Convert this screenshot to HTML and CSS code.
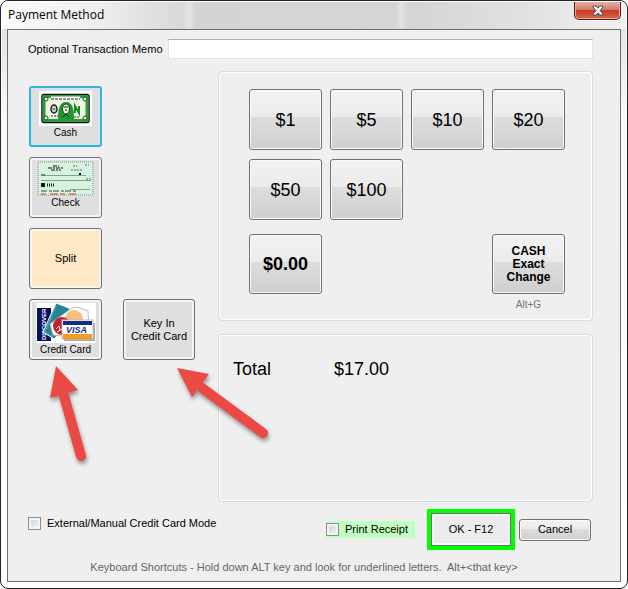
FILE: index.html
```html
<!DOCTYPE html>
<html lang="en">
<head>
    <meta charset="UTF-8">
    <meta name="viewport" content="width=device-width, initial-scale=1.0">
    <title>Payment Method</title>
    <link rel="stylesheet" href="styles.css">
</head>
<body>
    <div class="window">
        <!-- Title bar -->
        <header class="titlebar">
            <h1>Payment Method</h1>
            <button type="button" class="close" aria-label="Close">
                <svg width="12" height="11" viewBox="0 0 12 11">
                    <path d="M1 1h3.2L6 3.2 7.8 1H11v1L8 5.5 11 9v1H7.8L6 7.8 4.2 10H1V9l3-3.5L1 2z" fill="#fff" stroke="#4a4a5c"/>
                </svg>
            </button>
        </header>

        <form class="content">
            <!-- Memo -->
            <div class="memo">
                <label for="memo">Optional Transaction Memo</label>
                <input type="text" id="memo" name="memo">
            </div>

            <div class="main">
                <!-- Payment methods -->
                <div class="methods">
                    <button type="button" class="btn method selected">
                        <svg width="53" height="35" viewBox="0 0 53 35">
                            <rect width="53" height="35" fill="#fff"/>
                            <rect x="3" y="3.5" width="47" height="28" rx="2" fill="#eef6e2" stroke="#111" stroke-width="1.5"/>
                            <rect x="5" y="5.5" width="43" height="24" fill="none" stroke="#2f9a38" stroke-width="3"/>
                            <path d="M12 7h29" stroke="#fff" stroke-width="3"/>
                            <path d="M12 8h29" stroke="#222" stroke-dasharray="3 1"/>
                            <path d="M19 28c0-9 1-17 8-17s8 8 8 17z" fill="#1f9630"/>
                            <ellipse cx="27" cy="18" rx="3.5" ry="5" fill="#e6efd6" stroke="#173d18"/>
                            <path d="M25 16h4M26 19h2M24 26l3-3 3 3" stroke="#222" fill="none"/>
                            <ellipse cx="15" cy="18" rx="3" ry="4" fill="#ccc" stroke="#222" stroke-width="1.5"/>
                            <path d="M14 18h2" stroke="#222"/>
                            <path d="M36 22v-7l4 7v-7" stroke="#178a24" stroke-width="2" fill="none"/>
                            <path d="M12 25h7M35 26h6" stroke="#333" stroke-dasharray="2 1"/>
                            <g fill="#eaf5dc" stroke="#0c5817"><circle cx="7" cy="8" r="2"/><circle cx="46" cy="8" r="2"/><circle cx="7" cy="27" r="2"/><circle cx="46" cy="27" r="2"/></g>
                        </svg>
                        <span>Cash</span>
                    </button>
                    <button type="button" class="btn method">
                        <svg width="57" height="35" viewBox="0 0 57 35">
                            <rect x="1" y="1" width="55" height="33" fill="#d5f3df" stroke="#8a8a8a" stroke-dasharray="1 1"/>
                            <path d="M16 5h6M11 7h15M14 9h10" stroke="#111" stroke-dasharray="4 1 2 1"/>
                            <path d="M36 5h4M48 4h4M34 9h11M49 18h5" stroke="#666" stroke-dasharray="2 1"/>
                            <path d="M4 14h4" stroke="#111"/>
                            <path d="M8 14.5h41M4 19.5h50M33 28.5h20" stroke="#7fa58d"/>
                            <path d="M42 13h2" stroke="#111" stroke-width="2"/>
                            <rect x="4" y="22" width="4" height="4" fill="#111"/>
                            <path d="M10 24h8" stroke="#222" stroke-width="3" stroke-dasharray="1 1"/>
                            <path d="M4 30h35" stroke="#444" stroke-dasharray="6 2 3 1"/>
                            <path d="M4 33h35" stroke="#d33" stroke-dasharray="5 4 8 2"/>
                        </svg>
                        <span>Check</span>
                    </button>
                    <button type="button" class="btn split">Split</button>
                    <button type="button" class="btn method">
                        <svg width="60" height="40" viewBox="0 0 60 40">
                            <rect width="60" height="40" fill="#fff"/>
                            <rect x="1" y="5" width="14" height="33" fill="#07105c"/>
                            <text transform="translate(10 37) rotate(-90)" class="discover">DISCOVER</text>
                            <path d="M20 0l13 5 3 13-18 18L7 29z" fill="#258497" stroke="#fff"/>
                            <path d="M20 3L9 29l8 5" fill="none" stroke="#9bd0d6" stroke-dasharray="1 1"/>
                            <path d="M14 21L36 5q4-2 8 0l8 3 1 22-17 4-19-2z" fill="#fbfbf8" stroke="#bbb"/>
                            <circle cx="38" cy="16" r="9" fill="#f4c080"/>
                            <circle cx="26" cy="23" r="9" fill="#c5202e"/>
                            <path d="M20 26l3-3 1 4M21 29l5-3" stroke="#fff" fill="none"/>
                            <rect x="28" y="20" width="31" height="18" fill="#aaa"/>
                            <rect x="26" y="17" width="31" height="19" fill="#fff" stroke="#bbb"/>
                            <rect x="27" y="18" width="29" height="4" fill="#112f7d"/>
                            <text x="30" y="30" class="visa">VISA</text>
                            <rect x="27" y="31" width="29" height="5" fill="#f79c1d"/>
                        </svg>
                        <span>Credit Card</span>
                    </button>
                    <button type="button" class="btn keyin">Key In<br>Credit Card</button>

                    <!-- Callout arrows -->
                    <svg class="arrow arrow-card" width="60" height="110" viewBox="0 0 60 110">
                        <path d="M24 36L41 96" stroke="#ea4a43" stroke-width="10" stroke-linecap="round"/>
                        <path d="M16 6L38 30 10 38z" fill="#ea4a43"/>
                    </svg>
                    <svg class="arrow arrow-keyin" width="110" height="90" viewBox="0 0 110 90">
                        <path d="M32 28L93 73" stroke="#ea4a43" stroke-width="10" stroke-linecap="round"/>
                        <path d="M7 8L39 14 22 37z" fill="#ea4a43"/>
                    </svg>
                </div>

                <div class="panels">
                    <!-- Cash amounts -->
                    <section class="panel cash">
                        <div class="amounts">
                            <button type="button" class="btn amount">$1</button>
                            <button type="button" class="btn amount">$5</button>
                            <button type="button" class="btn amount">$10</button>
                            <button type="button" class="btn amount">$20</button>
                            <button type="button" class="btn amount">$50</button>
                            <button type="button" class="btn amount">$100</button>
                        </div>
                        <div class="exact-row">
                            <button type="button" class="btn amount zero">$0.00</button>
                            <div class="exact">
                                <button type="button" class="btn amount change">CASH<br>Exact<br>Change</button>
                                <small>Alt+G</small>
                            </div>
                        </div>
                    </section>

                    <!-- Total -->
                    <section class="panel total">
                        <span>Total</span>
                        <output>$17.00</output>
                    </section>
                </div>
            </div>

            <!-- Actions -->
            <div class="actions">
                <label class="check"><input type="checkbox" name="external">External/Manual Credit Card Mode</label>
                <label class="check receipt"><input type="checkbox" name="receipt">Print Receipt</label>
                <button type="button" class="btn ok">OK - F12</button>
                <button type="button" class="btn cancel">Cancel</button>
            </div>
            <p class="hint">Keyboard Shortcuts - Hold down ALT key and look for underlined letters.&nbsp; Alt+&lt;that key&gt;</p>
        </form>
    </div>
</body>
</html>
```
FILE: styles.css
```css
* {
    box-sizing: border-box;
}
body {
    margin: 0;
    background: #fff;
    font-family: "Liberation Sans", Arial, sans-serif;
    font-size: 11px;
    line-height: 13px;
    color: #000;
}
button, input {
    font: inherit;
    color: inherit;
    margin: 0;
}

/* Window frame */
.window {
    display: flex;
    flex-direction: column;
    min-height: 100vh;
    padding: 0 6px 6px;
    border: 1px solid #242428;
    border-radius: 8px;
    background: linear-gradient(#dedede, #fafafa 120px, #fff);
    box-shadow: inset 0 0 0 1px #fff;
}
.titlebar {
    display: flex;
    justify-content: space-between;
    align-items: flex-start;
    height: 28px;
    margin: 0 -5px;
    padding: 0 5px 0 2px;
    border-top: 1px solid #fff;
    border-radius: 6px 6px 0 0;
    background: linear-gradient(90deg, #fafafa, #eee 16%, #d8d8d8 29%, #e4e4e4 30%, #d4d4d4 31%, #d5d5d5 63%, #e2e2e2 64%, #d4d4d4 65%, #e2e2e2 85%, #f2f2f2);
}
h1 {
    margin: 0;
    padding: 6px 4px;
    font-family: "Open Sans", "Noto Sans", sans-serif;
    font-size: 12px;
    font-weight: normal;
    line-height: 14px;
}
.close {
    display: flex;
    align-items: center;
    justify-content: center;
    width: 47px;
    height: 18px;
    padding: 0;
    border: 1px solid #571d18;
    border-top: 0;
    border-radius: 0 0 5px 5px;
    background: linear-gradient(#eab0a5, #d77b6c 45%, #c33b22 50%, #d66b4e);
    box-shadow: inset 0 0 0 1px #eba79a, 0 1px 0 #fff;
}
.content {
    flex: 1;
    padding: 9px 27px 0 20px;
    border: 1px solid #6c706b;
    background: #efefef;
}

/* Memo */
.memo {
    display: flex;
    align-items: center;
    gap: 5px;
    margin-bottom: 12px;
}
.memo input {
    flex: 1;
    min-width: 0;
    height: 20px;
    border: 1px solid #e2e3ea;
    border-top-color: #abadb3;
    background: #fff;
}

/* Buttons */
.btn {
    padding: 0;
    border: 1px solid #707070;
    border-radius: 3px;
    background: linear-gradient(#f2f2f2, #ebebeb 46%, #dddddd 46%, #cfcfcf);
    box-shadow: inset 0 0 0 1px #fafafa;
}
.main {
    display: flex;
    gap: 23px;
    padding-left: 1px;
}
.methods {
    position: relative;
    display: grid;
    grid-template-columns: 73px 72px;
    grid-auto-rows: 61px;
    align-content: start;
    gap: 10px 21px;
    margin-top: 15px;
}
.methods .btn {
    grid-column: 1;
    background: #dfdfdf;
    box-shadow: inset 0 0 0 2px #f4f4f4;
}
.methods .method {
    display: flex;
    flex-direction: column;
    align-items: center;
    justify-content: flex-start;
    padding: 3px 0 0;
    font-size: 10px;
    line-height: 14px;
}
.methods .selected {
    border: 2px solid #3bb0dd;
    box-shadow: inset 0 0 0 1px #c8e8f4;
}
.methods .split {
    background: #ffe8c6;
}
.methods .keyin {
    grid-row: 4;
    grid-column: 2;
}
.discover {
    font-size: 6px;
    font-weight: bold;
    fill: #fff;
}
.visa {
    font-size: 9px;
    font-weight: bold;
    font-style: italic;
    fill: #112f7d;
}
.arrow {
    position: absolute;
    top: 274px;
    z-index: 1;
    fill: none;
    filter: drop-shadow(1px 3px 2px rgba(0, 0, 0, 0.4));
    pointer-events: none;
}
.arrow-card {
    left: 11px;
}
.arrow-keyin {
    left: 141px;
}

/* Panels */
.panels {
    flex: 1;
    display: flex;
    flex-direction: column;
    gap: 13px;
}
.panel {
    border: 1px solid #d3dde5;
    border-radius: 4px;
    box-shadow: inset 0 0 0 1px #fff;
}
.cash {
    min-height: 250px;
    padding: 17px 27px 8px 30px;
}
.amounts {
    display: grid;
    grid-template-columns: repeat(4, 73px);
    grid-auto-rows: 61px;
    gap: 9px 8px;
}
.amount {
    width: 73px;
    font-size: 18px;
    line-height: 20px;
}
.exact-row {
    display: flex;
    justify-content: space-between;
    align-items: flex-start;
    margin-top: 14px;
}
.zero, .change {
    height: 60px;
    font-weight: bold;
}
.change {
    font-size: 12px;
    line-height: 13px;
}
.exact {
    display: flex;
    flex-direction: column;
    align-items: center;
    gap: 4px;
}
small {
    font-size: 10px;
    color: #777;
}
.total {
    display: flex;
    gap: 63px;
    min-height: 168px;
    padding: 24px 14px;
    font-size: 18px;
    line-height: 20px;
}

/* Actions */
.actions {
    display: flex;
    align-items: center;
    margin-top: 7px;
    padding-right: 2px;
}
.check {
    display: flex;
    align-items: center;
    gap: 6px;
}
.check input {
    appearance: none;
    width: 13px;
    height: 13px;
    border: 1px solid #8e8f8f;
    background: linear-gradient(135deg, #cbcfd5, #f6f6f6);
    box-shadow: inset 0 0 0 2px #f4f4f4;
}
.check:first-child {
    align-self: flex-start;
    margin-top: 8px;
}
.receipt {
    margin-left: auto;
    height: 17px;
    padding-right: 7px;
    background: #c0ffc0;
}
.ok {
    width: 88px;
    height: 41px;
    margin: 0 4px 0 12px;
    border: 4px solid #0f0;
    border-radius: 0;
    background: #ececec;
    box-shadow: inset 0 0 0 1px #707070, inset 0 0 0 3px #fafafa;
}
.cancel {
    width: 72px;
    height: 22px;
}
.hint {
    margin: 11px 0 6px;
    padding-right: 13px;
    text-align: center;
    color: #666;
}
```
